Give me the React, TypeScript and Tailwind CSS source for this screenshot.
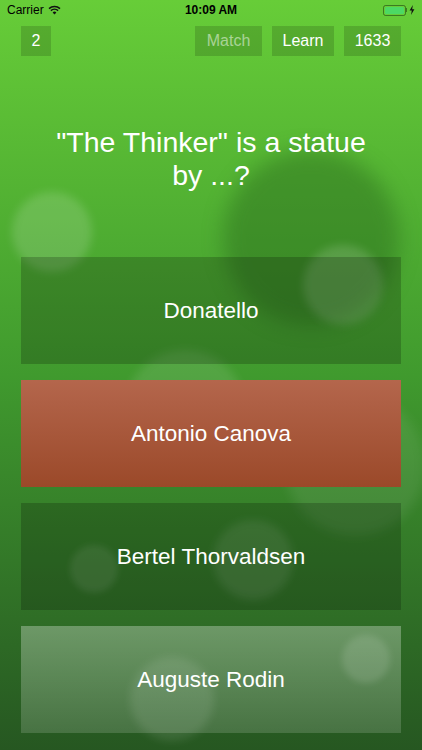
import React from 'react';

const font = { fontFamily: '"Liberation Sans", Arial, sans-serif' };

function Bokeh() {
  return (
    <div className="pointer-events-none absolute inset-0">
      <div className="absolute left-[223px] top-[150px] h-[176px] w-[176px] rounded-full bg-[#2a6a1c]/45 blur-[10px]" />
      <div className="absolute left-[12px] top-[192px] h-[80px] w-[80px] rounded-full bg-white/15 blur-[4px]" />
      <div className="absolute left-[303px] top-[245px] h-[80px] w-[80px] rounded-full bg-white/15 blur-[4px]" />
      <div className="absolute left-[125px] top-[350px] h-[120px] w-[120px] rounded-full bg-white/10 blur-[5px]" />
      <div className="absolute left-[285px] top-[395px] h-[140px] w-[140px] rounded-full bg-white/8 blur-[6px]" />
      <div className="absolute left-[70px] top-[545px] h-[48px] w-[48px] rounded-full bg-white/10 blur-[3px]" />
      <div className="absolute left-[213px] top-[520px] h-[80px] w-[80px] rounded-full bg-white/10 blur-[4px]" />
      <div className="absolute left-[342px] top-[635px] h-[48px] w-[48px] rounded-full bg-white/12 blur-[3px]" />
      <div className="absolute left-[130px] top-[657px] h-[84px] w-[84px] rounded-full bg-white/10 blur-[4px]" />
    </div>
  );
}

function StatusBar() {
  return (
    <div className="flex h-[20px] items-center justify-between px-[7px] text-[12px] text-black">
      <div className="flex w-[120px] items-center gap-[4px]">
        <span>Carrier</span>
        <svg width="13" height="10" viewBox="0 0 13 10">
          <path d="M6.5 9.5 L4.6 7.4 A2.8 2.8 0 0 1 8.4 7.4 Z" fill="#111" />
          <path d="M2.9 5.6 A5.3 5.3 0 0 1 10.1 5.6" stroke="#111" strokeWidth="1.5" fill="none" />
          <path d="M1 3.6 A8 8 0 0 1 12 3.6" stroke="#111" strokeWidth="1.5" fill="none" />
        </svg>
      </div>
      <span className="font-bold">10:09 AM</span>
      <div className="flex w-[120px] items-center justify-end gap-[2px]">
        <div className="flex items-center">
          <div className="h-[11px] w-[23px] rounded-[2.5px] border border-black/40 p-[1px]">
            <div className="h-full w-full rounded-[1.5px] bg-[#4cd964]" />
          </div>
          <div className="h-[4px] w-[1.5px] bg-black/40" />
        </div>
        <svg width="6" height="10" viewBox="0 0 6 10">
          <path d="M3.8 0 L0.6 5.6 H2.8 L2 10 L5.4 4.2 H3.2 Z" fill="#111" />
        </svg>
      </div>
    </div>
  );
}

const answers = [
  { label: 'Donatello', cls: 'bg-black/20' },
  { label: 'Antonio Canova', cls: 'bg-gradient-to-b from-[#b4664c] to-[#9b4929]' },
  { label: 'Bertel Thorvaldsen', cls: 'bg-black/20' },
  { label: 'Auguste Rodin', cls: 'bg-gradient-to-b from-white/30 to-white/15' },
];

export default function App() {
  return (
    <div
      className="relative h-[750px] w-[422px] overflow-hidden bg-gradient-to-b from-[#67cd38] via-[#409a2e] to-[#265721]"
      style={font}
    >
      <Bokeh />
      <div className="relative flex flex-col">
        <StatusBar />
        <div className="mt-[6px] flex h-[30px] items-center px-[21px] text-[16px] text-white">
          <div className="flex h-[30px] w-[30px] items-center justify-center bg-black/15">2</div>
          <div className="ml-auto flex gap-[10px]">
            <div className="flex h-[30px] w-[67px] items-center justify-center bg-black/15 text-white/50">Match</div>
            <div className="flex h-[30px] w-[62px] items-center justify-center bg-black/15">Learn</div>
            <div className="flex h-[30px] w-[57px] items-center justify-center bg-black/15">1633</div>
          </div>
        </div>
        <div className="mt-[70px] px-[20px] text-center text-[28.5px] leading-[33px] text-white">
          "The Thinker" is a statue
          <br />
          by ...?
        </div>
        <div className="mx-[21px] mt-[65px] flex flex-col gap-[16px]">
          {answers.map((a) => (
            <div
              key={a.label}
              className={`flex h-[107px] items-center justify-center text-[22.5px] text-white ${a.cls}`}
            >
              {a.label}
            </div>
          ))}
        </div>
      </div>
    </div>
  );
}
